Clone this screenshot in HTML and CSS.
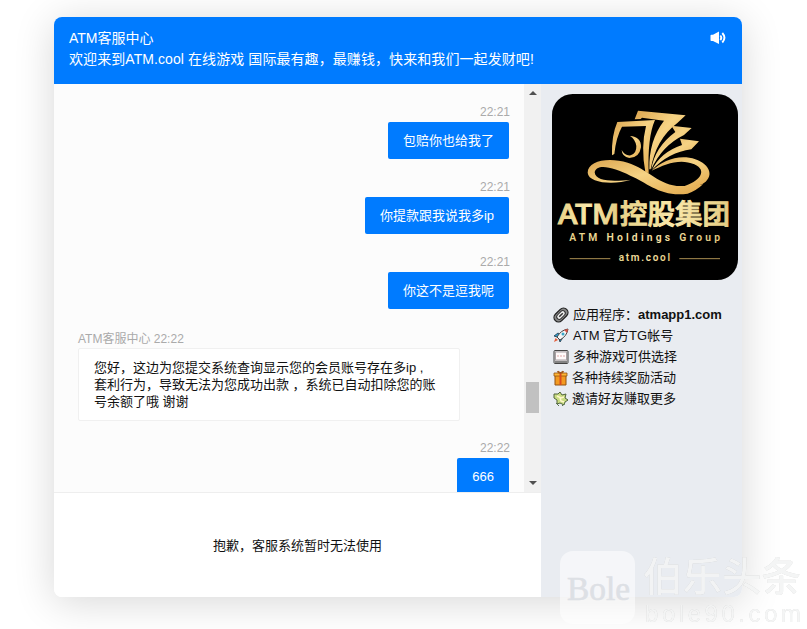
FILE: index.html
```
<!DOCTYPE html>
<html lang="zh-CN">
<head>
<meta charset="utf-8">
<title>ATM客服中心</title>
<link rel="stylesheet" href="styles.css">
</head>
<body>
<div class="window">
  <header class="header">
    <div class="header-text">
      <div>ATM客服中心</div>
      <div class="welcome">欢迎来到ATM.cool 在线游戏 国际最有趣，最赚钱，快来和我们一起发财吧!</div>
    </div>
    <svg class="sound" viewBox="0 0 16 14" width="16" height="14">
      <path d="M0.500 4.500Q.5 3.800 1.500 3.800H3L9 .5V13L3 10H1.500Q.5 10 .5 9.200Z" fill="#fff"/>
      <path d="M10.300 4.500Q12.300 6.800 10.300 9M12.300 2Q16.600 6.800 12.300 11.500" fill="none" stroke="#fff" stroke-width="1.900"/>
    </svg>
  </header>
  <div class="body">
    <main class="main">
      <div class="chat">
        <div class="messages">
          <div class="row mine"><span class="meta">22:21</span><div class="bubble">包赔你也给我了</div></div>
          <div class="row mine"><span class="meta">22:21</span><div class="bubble">你提款跟我说我多ip</div></div>
          <div class="row mine"><span class="meta">22:21</span><div class="bubble">你这不是逗我呢</div></div>
          <div class="row agent"><span class="meta">ATM客服中心 22:22</span><div class="bubble">您好，这边为您提交系统查询显示您的会员账号存在多ip ,<br>套利行为，导致无法为您成功出款 ，系统已自动扣除您的账<br>号余额了哦 谢谢</div></div>
          <div class="row mine"><span class="meta">22:22</span><div class="bubble">666</div></div>
        </div>
        <div class="scrollbar">
          <i class="arrow up"></i>
          <i class="thumb"></i>
          <i class="arrow down"></i>
        </div>
      </div>
      <div class="notice">抱歉，客服系统暂时无法使用</div>
    </main>
    <aside class="side">
      <svg class="logo" viewBox="21 18 558 558" width="186" height="186">
        <defs>
          <linearGradient id="gold" x1="0" y1="0" x2="1" y2="1">
            <stop offset="0" stop-color="#dca650"/><stop offset=".45" stop-color="#f6d384"/><stop offset="1" stop-color="#e2a94c"/>
          </linearGradient>
          <linearGradient id="pale" x1="0" y1="0" x2="1" y2="0">
            <stop offset="0" stop-color="#e8d489"/><stop offset=".5" stop-color="#fae8aa"/><stop offset="1" stop-color="#e3cc81"/>
          </linearGradient>
        </defs>
        <rect x="21" y="18" width="558" height="558" rx="62" fill="#000"/>
        <g fill="url(#gold)" transform="translate(111 48)">
          <path d="M90 154Q88 95 106 54L219 48Q196 100 200 208L190 204Q176 130 192 66L120 68Q102 100 97 150Z"/>
          <path d="M158 46L168 20L311 34L286 57Q222 105 206 196L202 196Q200 110 246 50L180 41L176 45Z"/>
          <path d="M268 65L329 72L306 93Q240 125 208 196Q218 130 280 84Z"/>
          <path d="M294 104L351 112L328 136Q260 145 210 198Q235 145 300 123Z"/>
          <path d="M144 96Q178 98 177 130Q172 162 142 162Q120 158 119 138Q128 156 146 154Q164 148 163 126Q160 106 144 96Z"/>
        </g>
        <g fill="url(#gold)">
          <path d="M258 275C205 292 130 285 128 254C128 216 194 207 248 224C306 241 343 294 407 294Q445 295 474 289Q453 309 428 317C350 329 307 284 256 263C208 239 155 224 149 253C151 282 210 281 258 275Z"/>
          <path d="M320 248C350 221 390 202 433 209C484 217 511 255 482 281Q463 299 412 296C465 282 489 247 448 229C406 210 361 228 320 248Z"/>
        </g>
        <g fill="url(#pale)">
          <text class="logo-title" x="39" y="408" textLength="184" lengthAdjust="spacingAndGlyphs">ATM</text>
          <text class="logo-title" x="225" y="407" textLength="330" lengthAdjust="spacingAndGlyphs">控股集团</text>
          <text class="logo-sub" x="73" y="459" textLength="452">ATM Holdings Group</text>
          <text class="logo-url" x="221" y="520" textLength="154">atm.cool</text>
        </g>
        <path d="M74 512H196M403 512H525" stroke="#a98e51" stroke-width="3"/>
      </svg>
      <ul class="links">
        <li><svg viewBox="0 0 16 16"><g transform="rotate(-45 8 8)" fill="none"><rect x="0" y="3.500" width="16" height="9" rx="4.500" fill="#8a8a8a" stroke="#222" stroke-width="1.300"/><rect x="3" y="5.500" width="10" height="5" rx="2.500" fill="#eee" stroke="#333"/><path d="M5.500 8H10.500" stroke="#333" stroke-width="1.500"/></g></svg><span>应用程序：<b>atmapp1.com</b></span></li>
        <li><svg viewBox="0 0 16 16"><path d="M1 8L5 5L8 7L9 11L7 14L6 11L4 9Z" fill="#2e9fd0" stroke="#234" stroke-width=".8"/><path d="M4 9Q8 2 15 1Q14 8 7 12Z" fill="#f5f5f5" stroke="#444"/><path d="M11 2L15 1L14 5Z" fill="#dc5142"/><circle cx="10" cy="6" r="1.500" fill="#38a6c9"/><path d="M1 14L2.500 10L5 12Z" fill="#e45b37"/></svg><span>ATM 官方TG帐号</span></li>
        <li><svg viewBox="0 0 16 16"><rect x="1" y="1.500" width="14" height="13" rx="1" fill="#ddd" stroke="#444"/><rect x="2.500" y="3" width="11" height="8" fill="#fffafa" stroke="#a9a0a4"/><path d="M4 7H12" stroke="#dfa8a8" stroke-dasharray="2 1"/><path d="M2 13H14" stroke="#666" stroke-width="1.500"/></svg><span>多种游戏可供选择</span></li>
        <li><svg viewBox="0 0 16 16"><path d="M2 5H13V15H2Z" fill="#f39a20" stroke="#925313"/><path d="M1 3H14V6H1Z" fill="#ffb636" stroke="#925313" stroke-width=".8"/><path d="M6.500 3H8.500V15H6.500Z" fill="#d94c21"/><path d="M7.500 3Q4 3 4.500 1.500Q6 .5 7.500 3Q9 .5 10.500 1.500Q11 3 7.500 3" fill="#ed8d25" stroke="#8c4715" stroke-width=".8"/></svg><span class="tight">各种持续奖励活动</span></li>
        <li><svg viewBox="0 0 16 16"><path d="M1 3L5 3L7 1L9 4L13 3L12 7L15 9L12 11L11 14L7 12L4 13L4 9L1 7Z" fill="#c9dc82" stroke="#52643c"/><path d="M4 5L8 7L11 6M7 7L8 10L11 11" fill="none" stroke="#fff6cb" stroke-width="1.500"/><path d="M3 12L6 15M12 12L9 15" stroke="#5a7450"/></svg><span class="tight">邀请好友赚取更多</span></li>
      </ul>
    </aside>
  </div>
</div>
<svg class="watermark" viewBox="555 545 252 84" width="252" height="84">
  <rect x="560" y="551" width="75" height="73" rx="13" fill="#fff" fill-opacity=".55"/>
  <text class="wm-badge" x="567" y="600" textLength="63" lengthAdjust="spacingAndGlyphs">Bole</text>
  <g class="wm-shadow">
    <text class="wm-name" x="643" y="591" textLength="158" lengthAdjust="spacingAndGlyphs">伯乐头条</text>
    <text class="wm-url" x="645" y="622" textLength="156">bole90.com</text>
  </g>
</svg>
</body>
</html>
```
FILE: styles.css
```
* { box-sizing: border-box; }

body {
  margin: 0;
  height: 629px;
  padding: 17px 0 0 54px;
  overflow: hidden;
  background: #fff;
  color: #111;
  font: 13px/17px "Liberation Sans", "Noto Sans CJK SC", sans-serif;
}

.window {
  display: flex;
  flex-direction: column;
  width: 688px;
  height: 580px;
  border-radius: 8px;
  overflow: hidden;
  box-shadow: 0 5px 40px rgba(0, 0, 0, .16);
}

.header {
  display: flex;
  justify-content: space-between;
  height: 67px;
  padding: 11px 16px 0 15px;
  background: #007bff;
  color: #fff;
  font-size: 14px;
  line-height: 21px;
}
.welcome { letter-spacing: .08px; }
.sound { margin-top: 3px; }

.body { display: flex; flex: 1; }
.main { width: 487px; display: flex; flex-direction: column; }

.chat {
  display: flex;
  height: 409px;
  overflow: hidden;
  background: #fcfcfc;
  border-bottom: 1px solid #eee;
}
.messages { flex: 1; padding: 20px 15px 0 24px; }
.row { display: flex; flex-direction: column; gap: 2px; margin-bottom: 20px; }
.mine { align-items: flex-end; }
.agent { align-items: flex-start; margin: 22px 0 19px; }
.meta { height: 16px; font-size: 12px; line-height: 17px; color: #aaa; white-space: nowrap; }
.agent .meta { height: 15px; }
.mine .meta { margin-right: -1px; }
.bubble { padding: 10px 15px; border-radius: 2px; white-space: nowrap; }
.mine .bubble { background: #007bff; color: #fff; }
.agent .bubble { width: 382px; background: #fff; border: 1px solid #f0f0f0; }

.scrollbar {
  display: flex;
  flex-direction: column;
  align-items: center;
  width: 17px;
  padding: 7px 0 7px;
  background: #f1f1f1;
}
.arrow { border: 4px solid transparent; }
.up { border-top: 0; border-bottom-color: #505050; }
.down { border-bottom: 0; border-top-color: #505050; margin-top: auto; }
.thumb { width: 13px; height: 31px; margin-top: 287px; background: #c1c1c1; }

.notice { flex: 1; display: grid; place-items: center; background: #fff; }

.side { flex: 1; padding: 10px 4px 0 11px; background: #e9ecf1; }
.logo { display: block; }
.logo-title { font: 500 82px "Noto Sans", "Noto Sans CJK SC", sans-serif; stroke: url(#pale); stroke-width: 3px; }
.logo-sub { font: 600 31px Roboto, sans-serif; }
.logo-url { font: 600 30px Roboto, sans-serif; }

.links { margin: 24px 0 0; padding: 0; list-style: none; }
.links li { display: flex; align-items: center; gap: 4px; height: 21px; padding-left: 1px; white-space: nowrap; }
.links svg { width: 16px; height: 16px; flex: none; }
.links .tight { margin-left: -1px; }

.watermark { position: absolute; left: 555px; top: 545px; }
.wm-badge { font: 34px "Liberation Serif", serif; fill: #dde0e5; stroke: #dde0e5; stroke-width: .6px; }
.wm-shadow { fill: #fafbfc; fill-opacity: .85; filter: drop-shadow(.5px .5px .5px rgba(0, 0, 0, .22)); }
.wm-name { font: 500 40px "Noto Sans CJK SC", sans-serif; }
.wm-url { font: 24px "Liberation Sans", sans-serif; }
```
